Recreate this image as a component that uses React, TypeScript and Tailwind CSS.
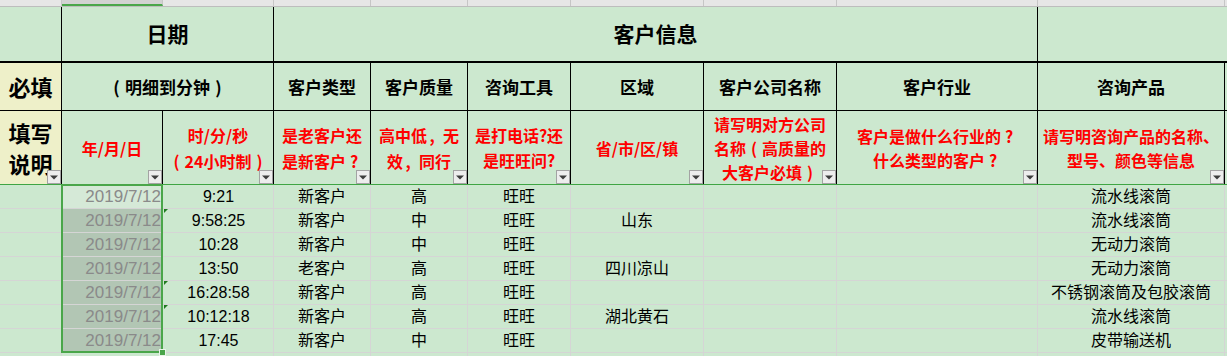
import React from "react";

const CJK = "font-['Noto_Sans_CJK_SC',sans-serif]";
const MIX = "font-['Liberation_Sans','Noto_Sans_CJK_SC',sans-serif]";

// widths include the 1px right border of every cell
const colW = [
  "w-[62px]",
  "w-[101px]",
  "w-[111px]",
  "w-[97px]",
  "w-[97px]",
  "w-[103px]",
  "w-[133px]",
  "w-[133px]",
  "w-[201px]",
  "w-[187px]",
];

// punctuation set in a full em box, ink centred like a wide CJK font
function P({ c, left }: { c: string; left?: boolean }) {
  return (
    <span className={`inline-block w-[1em] ${left ? "pl-[0.15em] text-left" : "text-center"}`}>{c}</span>
  );
}

function Drop() {
  return (
    <span className="absolute bottom-0 right-0 flex h-[14px] w-[14px] items-center justify-center border border-[#a3a3a3] bg-[#ededed]">
      <svg width="8" height="5" viewBox="0 0 8 5">
        <path d="M0 0.5h8L4 4.5z" fill="#3c3c3c" />
      </svg>
    </span>
  );
}

type Row = {
  time: string;
  type: string;
  q: string;
  tool: string;
  region: string;
  product: string;
  flag?: boolean;
};

const rows: Row[] = [
  { time: "9:21", type: "新客户", q: "高", tool: "旺旺", region: "", product: "流水线滚筒" },
  { time: "9:58:25", type: "新客户", q: "中", tool: "旺旺", region: "山东", product: "流水线滚筒", flag: true },
  { time: "10:28", type: "新客户", q: "中", tool: "旺旺", region: "", product: "无动力滚筒" },
  { time: "13:50", type: "老客户", q: "高", tool: "旺旺", region: "四川凉山", product: "无动力滚筒" },
  { time: "16:28:58", type: "新客户", q: "高", tool: "旺旺", region: "", product: "不锈钢滚筒及包胶滚筒", flag: true },
  { time: "10:12:18", type: "新客户", q: "高", tool: "旺旺", region: "湖北黄石", product: "流水线滚筒", flag: true },
  { time: "17:45", type: "新客户", q: "中", tool: "旺旺", region: "", product: "皮带输送机" },
];

const red = `${CJK} text-[16px] font-bold text-[#ff0000]`;

export default function App() {
  return (
    <div className="relative h-[356px] w-[1227px] overflow-hidden bg-[#cce8cf] text-black">
      {/* column header strip */}
      <div className="flex h-[7px] border-b border-[#bdbdbd] bg-[#e6e6e6]">
        {colW.map((w, i) => (
          <div
            key={i}
            className={`${w} shrink-0 border-r border-[#c6c6c6] ${
              i === 1 ? "border-b-2 border-b-[#4aa64a] bg-[#d2d2d2]" : ""
            }`}
          />
        ))}
        <div className="flex-1" />
      </div>

      {/* row 1: group titles */}
      <div className={`flex h-[56px] border-b-2 border-black ${CJK} text-[21px] font-bold`}>
        <div className="w-[62px] shrink-0 border-r border-black" />
        <div className="flex w-[212px] shrink-0 items-center justify-center border-r border-black">日期</div>
        <div className="flex w-[764px] shrink-0 items-center justify-center border-r border-black">客户信息</div>
        <div className="flex-1" />
      </div>

      {/* row 2: field names */}
      <div className={`flex h-[48px] border-b border-black ${CJK} text-[17px] font-bold`}>
        <div className="flex w-[62px] shrink-0 items-center justify-center border-r border-black bg-[#eef0c9] text-[22px]">
          必填
        </div>
        <div className="flex w-[212px] shrink-0 items-center justify-center border-r border-black">
          <span className="whitespace-nowrap">
            <P c="(" />
            明细到分钟
            <P c=")" />
          </span>
        </div>
        {["客户类型", "客户质量", "咨询工具", "区域", "客户公司名称", "客户行业", "咨询产品"].map((t, i) => (
          <div
            key={t}
            className={`${colW[i + 3]} flex shrink-0 items-center justify-center border-r border-black`}
          >
            {t}
          </div>
        ))}
        <div className="flex-1" />
      </div>

      {/* row 3: filling notes */}
      <div className="flex h-[74px] border-b border-[#3fa544]">
        <div
          className={`relative flex w-[62px] shrink-0 items-center justify-center border-r border-black bg-[#eef0c9] text-center ${CJK} text-[22px] font-bold leading-[31px]`}
        >
          <span>
            填写
            <br />
            说明
          </span>
          <Drop />
        </div>
        <div className={`relative flex w-[101px] shrink-0 items-center justify-center border-r border-black ${red}`}>
          年/月/日
          <Drop />
        </div>
        <div className={`relative flex w-[111px] shrink-0 items-center justify-center border-r border-black text-center ${red} leading-[26px]`}>
          <span className="whitespace-nowrap">
            时/分/秒
            <br />
            <P c="(" />
            24小时制
            <P c=")" />
          </span>
          <Drop />
        </div>
        <div className={`relative flex w-[97px] shrink-0 items-center justify-center border-r border-black text-center ${red} leading-[26px]`}>
          <span className="whitespace-nowrap">
            是老客户还
            <br />
            是新客户
            <P c="?" />
          </span>
          <Drop />
        </div>
        <div className={`relative flex w-[97px] shrink-0 items-center justify-center border-r border-black text-center ${red} leading-[26px]`}>
          <span className="whitespace-nowrap">
            高中低
            <P c="," left />
            无
            <br />
            效
            <P c="," left />
            同行
          </span>
          <Drop />
        </div>
        <div className={`relative flex w-[103px] shrink-0 items-center justify-center border-r border-black text-center ${red} leading-[25px]`}>
          <span>
            是打电话?还
            <br />
            是旺旺问?
          </span>
          <Drop />
        </div>
        <div className={`relative flex w-[133px] shrink-0 items-center justify-center border-r border-black ${red}`}>
          省/市/区/镇
          <Drop />
        </div>
        <div className={`relative flex w-[133px] shrink-0 items-center justify-center border-r border-black text-center ${red} leading-[24px]`}>
          <span className="whitespace-nowrap">
            请写明对方公司
            <br />
            名称
            <P c="(" />
            高质量的
            <br />
            大客户必填
            <P c=")" />
          </span>
          <Drop />
        </div>
        <div className={`relative flex w-[201px] shrink-0 items-center justify-center border-r border-black text-center ${red} leading-[24px]`}>
          <span className="whitespace-nowrap">
            客户是做什么行业的
            <P c="?" />
            <br />
            什么类型的客户
            <P c="?" />
          </span>
          <Drop />
        </div>
        <div className={`relative flex w-[187px] shrink-0 items-center justify-center border-r border-black text-center ${red} leading-[24px]`}>
          <span>
            请写明咨询产品的名称、
            <br />
            型号、颜色等信息
          </span>
          <Drop />
        </div>
        <div className="flex-1" />
      </div>

      {/* data rows */}
      <div className="relative">
        {[...rows, null].map((r, ri) => (
          <div key={ri} className={`flex h-[24px] border-b border-[#d5d5d5] ${MIX} text-[16px]`}>
            <div className="w-[62px] shrink-0 border-r border-[#d5d5d5]" />
            <div
              className={`flex w-[101px] shrink-0 items-center justify-end pr-[2px] text-[17px] text-[#8a8a8a] ${
                ri === 0 ? "bg-[#d5e9d7]" : r ? "bg-[#b2c6b4]" : ""
              }`}
            >
              {r ? "2019/7/12" : ""}
            </div>
            <div className="relative flex w-[111px] shrink-0 items-center justify-center border-r border-[#d5d5d5] pl-[1px]">
              {r?.flag && (
                <svg className="absolute left-[1px] top-0" width="4" height="4" viewBox="0 0 4 4">
                  <path d="M0 0h4L0 4z" fill="#1f7a1f" />
                </svg>
              )}
              {r?.time}
            </div>
            <div className="flex w-[97px] shrink-0 items-center justify-center border-r border-[#d5d5d5]">{r?.type}</div>
            <div className="flex w-[97px] shrink-0 items-center justify-center border-r border-[#d5d5d5]">{r?.q}</div>
            <div className="flex w-[103px] shrink-0 items-center justify-center border-r border-[#d5d5d5]">{r?.tool}</div>
            <div className="flex w-[133px] shrink-0 items-center justify-center border-r border-[#d5d5d5]">{r?.region}</div>
            <div className="w-[133px] shrink-0 border-r border-[#d5d5d5]" />
            <div className="w-[201px] shrink-0 border-r border-[#d5d5d5]" />
            <div className="flex w-[187px] shrink-0 items-center justify-center border-r border-[#d5d5d5]">{r?.product}</div>
            <div className="flex-1" />
          </div>
        ))}

        {/* selected range frame and fill handle */}
        <div className="pointer-events-none absolute left-[61px] top-[-1px] h-[169px] w-[102px] border-2 border-[#4aa64a]" />
        <div className="pointer-events-none absolute left-[159px] top-[164px] h-[7px] w-[7px] border border-[#e8f4e8] bg-[#4aa64a]" />
      </div>
    </div>
  );
}
